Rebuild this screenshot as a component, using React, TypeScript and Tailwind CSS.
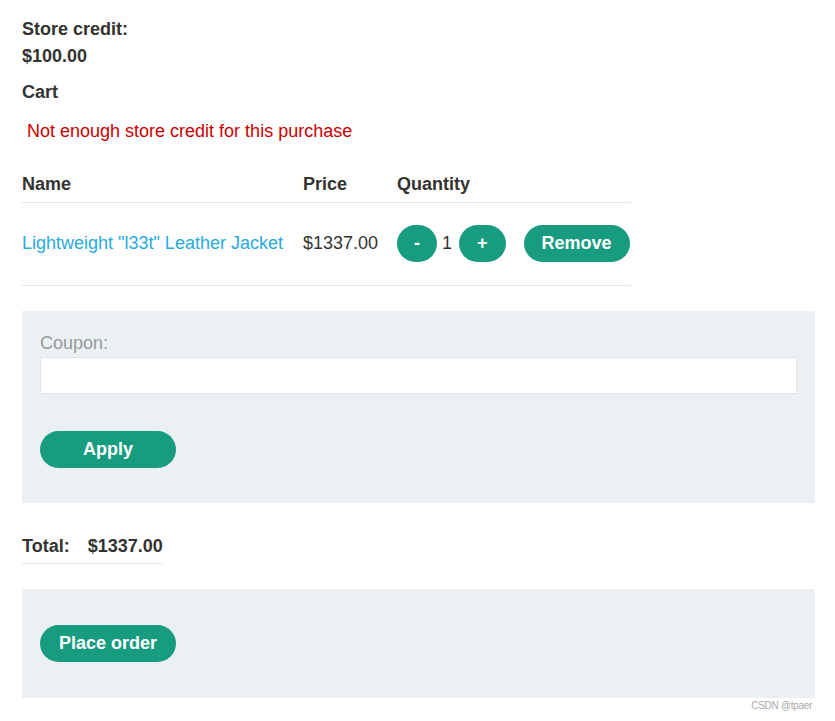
export default function App() {
  return (
    <div className="pl-[22px] pr-[20px] pt-[16px] font-['Liberation_Sans',Arial,sans-serif] text-[18px] leading-[27px] text-[#333332] bg-white min-h-[721px]">
      {/* Store credit */}
      <div className="font-bold">
        <div>Store credit:</div>
        <div>$100.00</div>
      </div>

      <div className="mt-[9px] font-bold">Cart</div>

      <p className="mt-[12px] pl-[5px] text-[#cc0000]">Not enough store credit for this purchase</p>

      {/* Cart table */}
      <table className="mt-[20px] w-[609px] border-collapse text-left">
        <thead>
          <tr className="border-b border-[#e6e6e6]">
            <th className="w-[281px] pt-[6px] pb-[4px] font-bold">Name</th>
            <th className="w-[94px] pt-[6px] pb-[4px] font-bold">Price</th>
            <th className="pt-[6px] pb-[4px] font-bold">Quantity</th>
          </tr>
        </thead>
        <tbody>
          <tr className="border-b border-[#e6e6e6]">
            <td className="pt-[22px] pb-[23px] align-middle">
              <a className="text-[#29abe0]">Lightweight "l33t" Leather Jacket</a>
            </td>
            <td className="pt-[22px] pb-[23px] align-middle">$1337.00</td>
            <td className="pt-[22px] pb-[23px] align-middle">
              <div className="flex items-center">
                <button className="h-[37px] rounded-full bg-[#189c80] px-[17px] font-bold text-white">-</button>
                <span className="ml-[5px] mr-[7px]">1</span>
                <button className="h-[37px] rounded-full bg-[#189c80] px-[18px] font-bold text-white">+</button>
                <button className="ml-[18px] h-[37px] rounded-full bg-[#189c80] px-[18px] font-bold text-white">Remove</button>
              </div>
            </td>
          </tr>
        </tbody>
      </table>

      {/* Coupon */}
      <div className="mt-[25px] w-[793px] bg-[#ebf0f2] px-[18px] pt-[19px] pb-[35px]">
        <label className="block text-[#999999]">Coupon:</label>
        <input className="block h-[37px] w-full border border-[#e3e3e3] bg-white outline-none" />
        <button className="mt-[37px] h-[37px] w-[136px] rounded-full bg-[#189c80] font-bold text-white">Apply</button>
      </div>

      {/* Total */}
      <table className="mt-[25px] border-collapse text-left">
        <tbody>
          <tr className="border-b border-[#e6e6e6]">
            <th className="pt-[5px] pb-[3px] pr-[18px] font-bold">Total:</th>
            <th className="pt-[5px] pb-[3px] font-bold">$1337.00</th>
          </tr>
        </tbody>
      </table>

      {/* Place order */}
      <div className="mt-[25px] w-[793px] bg-[#ebf0f2] px-[18px] py-[36px]">
        <button className="h-[37px] w-[136px] rounded-full bg-[#189c80] font-bold text-white">Place order</button>
      </div>

      <div className="w-[793px] pt-[1px] pr-[3px] text-right text-[10px] leading-[14px] tracking-[-0.3px] text-[#aaaaaa]">CSDN @tpaer</div>
    </div>
  );
}
